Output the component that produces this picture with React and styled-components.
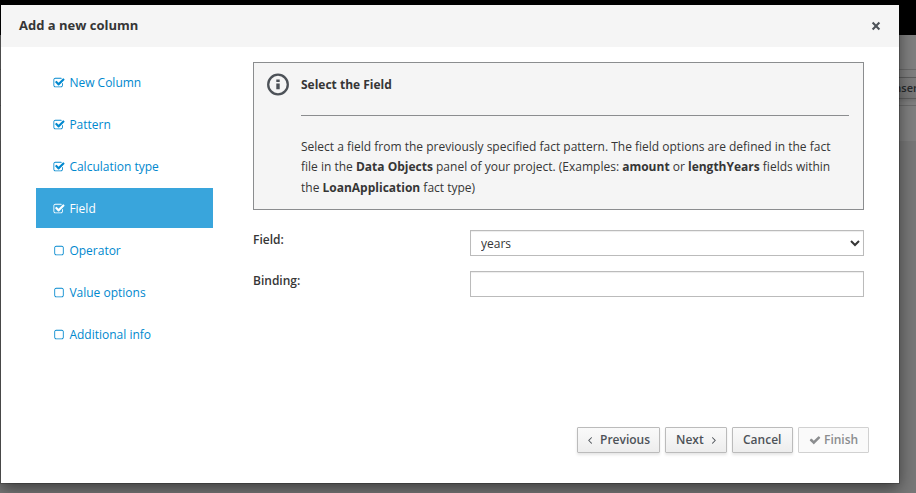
import React from "react";
import styled, { createGlobalStyle, css } from "styled-components";

const GlobalStyle = createGlobalStyle`
  * { box-sizing: border-box; }
  html, body { margin: 0; padding: 0; overflow: hidden; }
  body {
    font-family: "Open Sans", "Noto Sans", sans-serif;
    font-size: 12px;
    line-height: 20px;
    color: #363636;
    background: #777;
  }
`;

const Page = styled.div`
  position: relative;
  width: 916px;
  height: 493px;
  overflow: hidden;
  background: #777;
`;

const Masthead = styled.div`
  height: 35px;
  background: #000;
`;

const Toolbar = styled.div`
  height: 106px;
  padding-top: 34px;
  background: #7f7f7f;
`;

const ToolbarRow = styled.div`
  display: flex;
  justify-content: flex-end;
  height: 37px;
  padding-top: 7px;
  border-top: 1px solid #6a6a6a;
  border-bottom: 1px solid #6a6a6a;
`;

const InsertButton = styled.div`
  width: 60px;
  height: 22px;
  margin-right: -22px;
  padding-left: 15px;
  border: 1px solid #5d5d5d;
  background: linear-gradient(#7d7d7d, #767676);
  box-shadow: 0 2px 3px rgba(0, 0, 0, 0.1);
  color: #26292c;
  font-size: 11px;
  font-weight: 600;
  line-height: 20px;
  text-indent: -3px;
`;

const Dialog = styled.section`
  position: absolute;
  top: 5px;
  left: 1px;
  display: flex;
  flex-direction: column;
  width: 898px;
  height: 478px;
  background: #fff;
  box-shadow: 0 0 0 1px rgba(0, 0, 0, 0.2), 0 5px 15px rgba(0, 0, 0, 0.5);
`;

const Header = styled.header`
  display: flex;
  align-items: center;
  justify-content: space-between;
  height: 42px;
  padding: 0 18px;
  background: #f5f5f5;
`;

const Title = styled.h4`
  margin: 0 0 2px;
  font-size: 13px;
  font-weight: 700;
  line-height: 20px;
`;

const CloseButton = styled.button`
  display: flex;
  width: 10px;
  padding: 0;
  border: 0;
  background: none;
  color: #4d5258;
`;

const Body = styled.div`
  display: flex;
  flex: 1;
  gap: 40px;
  padding: 15px 35px 0;
`;

const Steps = styled.nav`
  display: flex;
  flex-direction: column;
  gap: 2px;
  width: 177px;
`;

const Step = styled.a`
  display: flex;
  align-items: center;
  height: 40px;
  padding: 2px 0 0 16.6px;
  gap: 4.8px;
  color: #0088ce;
  ${(p) =>
    p.$active &&
    css`
      color: #fff;
      background: #39a5dc;
    `}
`;

const Glyph = styled.svg`
  flex: none;
  display: block;
  width: ${(p) => p.$size || 12}px;
  height: ${(p) => p.$size || 12}px;
  fill: currentColor;
`;

const Content = styled.main`
  width: 611px;
`;

const InfoPanel = styled.div`
  display: flex;
  gap: 12px;
  height: 148px;
  padding: 10px 14px 0 13px;
  border: 1px solid #8b8d8f;
  background: #f5f5f5;
`;

const InfoIcon = styled.svg`
  flex: none;
  width: 22px;
  height: 23px;
  color: #4d5258;
`;

const InfoText = styled.div`
  flex: 1;
`;

const InfoTitle = styled.div`
  height: 43px;
  padding-top: 2px;
  border-bottom: 1px solid #8b8d8f;
  font-weight: 700;
`;

const InfoParagraph = styled.p`
  margin: 21px 0 0;
  line-height: 20.4px;
  white-space: nowrap;
`;

const Form = styled.form`
  display: grid;
  grid-template-columns: 217px 394px;
  row-gap: 15px;
  margin-top: 20px;
`;

const Label = styled.label`
  font-weight: 600;
  line-height: 20px;
`;

const control = css`
  width: 394px;
  height: 26px;
  margin: 0;
  border: 1px solid #bbb;
  border-radius: 0;
  background-color: #fff;
  box-shadow: inset 0 1px 1px rgba(3, 3, 3, 0.075);
  color: #363636;
  font: 12px "Open Sans", sans-serif;
`;

const Select = styled.select`
  ${control}
  padding: 1px 0 0 6px;
`;

const Input = styled.input`
  ${control}
  padding: 2px 6px;
`;

const Footer = styled.footer`
  display: flex;
  justify-content: flex-end;
  gap: 5px;
  height: 56px;
  padding-right: 30px;
`;

const Button = styled.button`
  display: flex;
  align-items: center;
  gap: ${(p) => p.$gap || 0}px;
  width: ${(p) => p.$width}px;
  height: 26px;
  padding: 0 0 0 ${(p) => p.$inset ?? 10}px;
  border: 1px solid #bbb;
  border-radius: 1px;
  background: linear-gradient(#fafafa, #ededed);
  box-shadow: 0 2px 3px rgba(3, 3, 3, 0.1);
  color: #4d5258;
  font: 600 12px/20px "Open Sans", sans-serif;
  &:disabled {
    border-color: #d1d1d1;
    background: #fafafa;
    box-shadow: none;
    color: #8b8d8f;
  }
`;

const PATHS = {
  checked:
    "M1472 930v318q0 119-84.5 203.5t-203.5 84.5h-832q-119 0-203.5-84.5t-84.5-203.5v-832q0-119 84.5-203.5t203.5-84.5h832q63 0 117 25 15 7 18 23 3 17-9 29l-49 49q-10 10-23 10-3 0-9-2-23-6-45-6h-832q-66 0-113 47t-47 113v832q0 66 47 113t113 47h832q66 0 113-47t47-113v-254q0-13 9-22l64-64q10-10 23-10 6 0 12 3 20 8 20 29zm231-489l-814 814q-24 24-57 24t-57-24l-430-430q-24-24-24-57t24-57l110-110q24-24 57-24t57 24l263 263 647-647q24-24 57-24t57 24l110 110q24 24 24 57t-24 57z",
  empty:
    "M1312 256h-832q-66 0-113 47t-47 113v832q0 66 47 113t113 47h832q66 0 113-47t47-113v-832q0-66-47-113t-113-47zm288 160v832q0 119-84.5 203.5t-203.5 84.5h-832q-119 0-203.5-84.5t-84.5-203.5v-832q0-119 84.5-203.5t203.5-84.5h832q119 0 203.5 84.5t84.5 203.5z",
  check:
    "M1671 566q0 40-28 68l-724 724-136 136q-28 28-68 28t-68-28l-136-136-362-362q-28-28-28-68t28-68l136-136q28-28 68-28t68 28l294 295 656-657q28-28 68-28t68 28l136 136q28 28 28 68z",
  left:
    "M1203 544q0 13-10 23l-393 393 393 393q10 10 10 23t-10 23l-50 50q-10 10-23 10t-23-10l-466-466q-10-10-10-23t10-23l466-466q10-10 23-10t23 10l50 50q10 10 10 23z",
  right:
    "M1171 960q0 13-10 23l-466 466q-10 10-23 10t-23-10l-50-50q-10-10-10-23t10-23l393-393-393-393q-10-10-10-23t10-23l50-50q10-10 23-10t23 10l466 466q10 10 10 23z",
};

const Icon = ({ name, size }) => (
  <Glyph viewBox="0 0 1792 1792" $size={size} aria-hidden="true">
    <path d={PATHS[name]} />
  </Glyph>
);

const STEPS = [
  { label: "New Column", done: true },
  { label: "Pattern", done: true },
  { label: "Calculation type", done: true },
  { label: "Field", done: true, active: true },
  { label: "Operator" },
  { label: "Value options" },
  { label: "Additional info" },
];

export default function App() {
  return (
    <Page>
      <GlobalStyle />
      <Masthead />
      <Toolbar>
        <ToolbarRow>
          <InsertButton>Insert</InsertButton>
        </ToolbarRow>
      </Toolbar>
      <Dialog>
        <Header>
          <Title>Add a new column</Title>
          <CloseButton aria-label="Close">
            <svg width="10" height="10" viewBox="0 0 10 10">
              <path d="M1.6 1.6 8.4 8.4M8.4 1.6 1.6 8.4" stroke="currentColor" strokeWidth="2.1" />
            </svg>
          </CloseButton>
        </Header>
        <Body>
          <Steps>
            {STEPS.map((s) => (
              <Step key={s.label} $active={s.active}>
                <Icon name={s.done ? "checked" : "empty"} />
                {s.label}
              </Step>
            ))}
          </Steps>
          <Content>
            <InfoPanel>
              <InfoIcon viewBox="0 0 22 22">
                <circle cx="11" cy="11" r="9.8" fill="none" stroke="currentColor" strokeWidth="2.3" />
                <path d="M9.3 6h3.4v2.6H9.3zM9.3 10h3.4v5.8H9.3z" fill="currentColor" />
              </InfoIcon>
              <InfoText>
                <InfoTitle>Select the Field</InfoTitle>
                <InfoParagraph>
                  Select a field from the previously specified fact pattern. The field options are defined in the fact
                  <br />
                  file in the <b>Data Objects</b> panel of your project. (Examples: <b>amount</b> or{" "}
                  <b>lengthYears</b> fields within
                  <br />
                  the <b>LoanApplication</b> fact type)
                </InfoParagraph>
              </InfoText>
            </InfoPanel>
            <Form>
              <Label htmlFor="field">Field:</Label>
              <Select id="field" defaultValue="years">
                <option>years</option>
              </Select>
              <Label htmlFor="binding">Binding:</Label>
              <Input id="binding" />
            </Form>
          </Content>
        </Body>
        <Footer>
          <Button $width={83} $inset={6} $gap={4}>
            <Icon name="left" />
            Previous
          </Button>
          <Button $width={62} $gap={4}>
            Next
            <Icon name="right" />
          </Button>
          <Button $width={61}>Cancel</Button>
          <Button $width={71} $gap={3} disabled>
            <Icon name="check" />
            Finish
          </Button>
        </Footer>
      </Dialog>
    </Page>
  );
}
